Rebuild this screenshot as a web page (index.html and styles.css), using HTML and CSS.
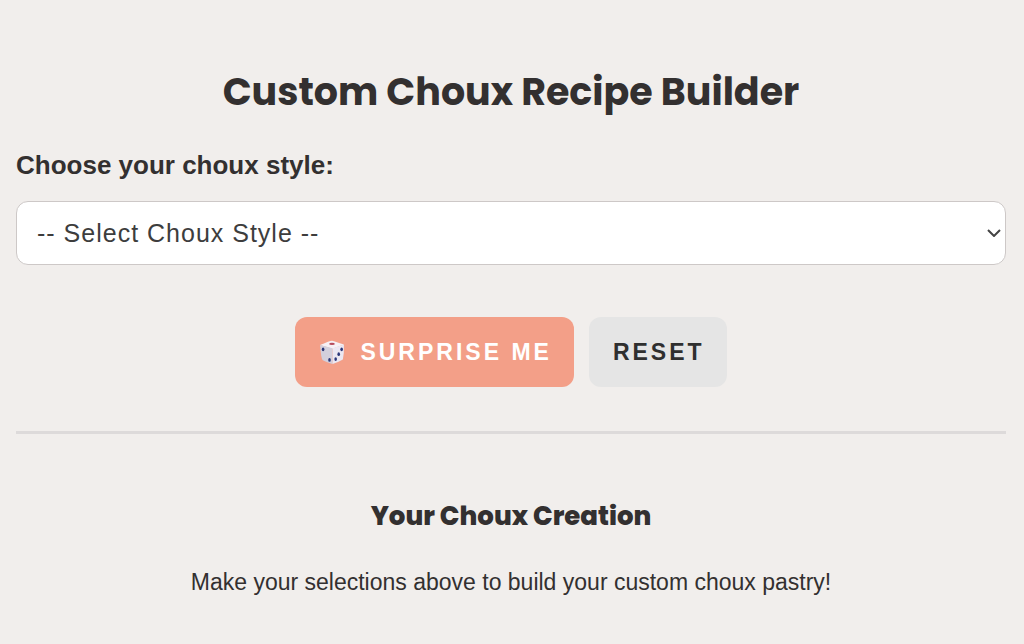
FILE: index.html
```html
<!DOCTYPE html>
<html lang="en">
<head>
<meta charset="utf-8">
<meta name="viewport" content="width=device-width, initial-scale=1">
<title>Custom Choux Recipe Builder</title>
<link rel="stylesheet" href="styles.css">
</head>
<body>
<main class="builder">
  <h1 class="title">Custom Choux Recipe Builder</h1>
  <form class="form">
    <label class="label" for="style">Choose your choux style:</label>
    <div class="select-wrap">
      <select class="select" id="style">
        <option>-- Select Choux Style --</option>
      </select>
      <svg class="chevron" viewBox="0 0 14 8" aria-hidden="true"><path d="M1 1 7 7l6-6"/></svg>
    </div>
    <div class="actions">
      <button class="button button-primary" type="button">
        <svg class="die" viewBox="0 0 24 24" aria-hidden="true">
          <path fill="#f6f0f5" d="M12 1.500Q13 1.500 23 5L12.500 9 1 5.500Q10 1.500 12 1.500Z"/>
          <path fill="#d3cfdc" d="M1 5.500 12.500 8.500V23Q10 22.500 3.500 19.500 2 19 1 5.500Z"/>
          <path fill="#ebe7f2" d="M12.500 8.500 23 5Q23.300 13 22 19 17 22 12.500 23Z"/>
          <ellipse cx="12" cy="4.500" rx="2.600" ry="1" fill="#b64b5c"/>
          <g fill="#2c3779">
            <ellipse cx="3.800" cy="9.500" rx="1.200" ry="1.700"/>
            <ellipse cx="9.700" cy="19.300" rx="1.200" ry="1.700"/>
            <ellipse cx="20.900" cy="9.500" rx="1.200" ry="1.700"/>
            <ellipse cx="18.200" cy="14" rx="1.200" ry="1.700"/>
            <ellipse cx="15.400" cy="18.500" rx="1.200" ry="1.700"/>
          </g>
        </svg>
        Surprise Me
      </button>
      <button class="button button-reset" type="reset">Reset</button>
    </div>
  </form>
  <section class="result">
    <h2 class="subtitle">Your Choux Creation</h2>
    <p class="message">Make your selections above to build your custom choux pastry!</p>
  </section>
</main>
</body>
</html>
```
FILE: styles.css
```css
* { box-sizing: border-box; }
body {
  margin: 0;
  background: #f1eeec;
  color: #333030;
  font-family: "Liberation Sans", Arial, sans-serif;
}
.builder { padding: 64px 18px 40px 16px; }
.title, .subtitle {
  margin: 0;
  font-family: Poppins, Inter, sans-serif;
  font-weight: 800;
  text-align: center;
}
.title { font-size: 38px; font-weight: 700; line-height: 56px; }
.label {
  display: block;
  margin-top: 27px;
  font-size: 26px;
  font-weight: 700;
  line-height: 36px;
}
.select-wrap { display: grid; align-items: center; margin-top: 18px; }
.select, .chevron { grid-area: 1 / 1; }
.select {
  appearance: none;
  width: 100%;
  height: 64px;
  padding: 0 20px;
  border: 1px solid #cdc8c7;
  border-radius: 12px;
  background: #fff;
  color: #3d3d3d;
  font: 25px "Liberation Sans", Arial, sans-serif;
  letter-spacing: 1px;
}
.chevron {
  justify-self: end;
  width: 14px;
  height: 8px;
  margin-right: 5px;
  fill: none;
  stroke: #444;
  stroke-width: 2;
  pointer-events: none;
}
.actions { display: flex; justify-content: center; gap: 15px; margin-top: 52px; }
.button {
  display: flex;
  align-items: center;
  gap: 15px;
  height: 70px;
  padding: 0 22px 0 24px;
  border: 0;
  border-radius: 12px;
  font: 700 23px "Liberation Sans", Arial, sans-serif;
  letter-spacing: 3px;
  text-transform: uppercase;
}
.button-primary { background: #f39f88; color: #fff; }
.button-reset { background: #e5e5e5; color: #2f2f2f; }
.die { width: 26px; height: 26px; }
.result {
  margin-top: 44px;
  padding-top: 62px;
  border-top: 3px solid #dddada;
  text-align: center;
}
.subtitle { font-size: 26px; line-height: 40px; }
.message { margin: 28px 0 0; font-size: 23px; line-height: 36px; }
```
